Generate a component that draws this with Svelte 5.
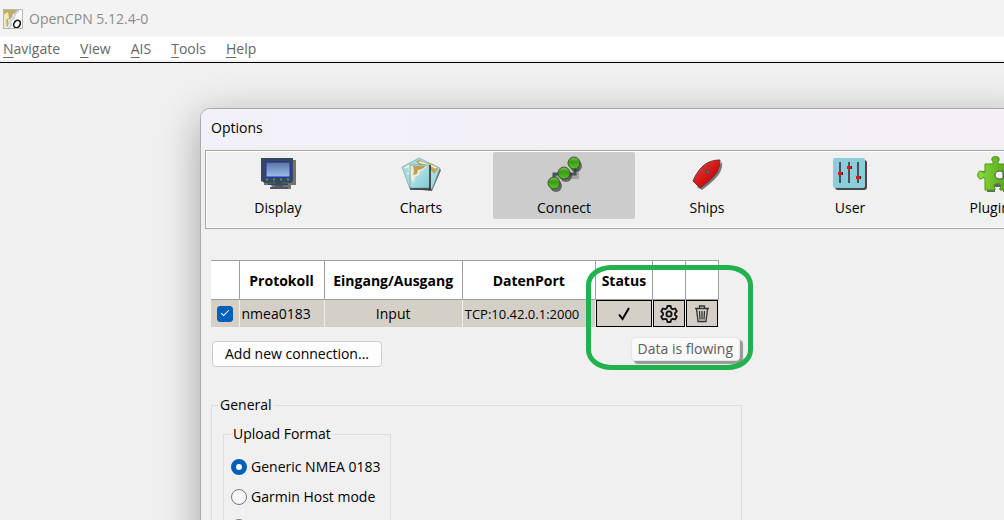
<script lang="ts">
  const menus = ["Navigate", "View", "AIS", "Tools", "Help"];
  const tabs = ["Display", "Charts", "Connect", "Ships", "User", "Plugins"];
  const formats = ["Generic NMEA 0183", "Garmin Host mode", "Furuno GP3X"];

  let activeTab = $state("Connect");
  let enabled = $state(true);
  let format = $state("Generic NMEA 0183");
</script>

<div class="app">
  <header class="titlebar">
    <svg width="20" height="20" viewBox="0 0 20 20" aria-hidden="true">
      <rect width="20" height="20" fill="#fbfbf8" />
      <path d="M0 0H16L13 4L10 5L9 9L5 11L6 15L3 20H0Z" fill="#c5ac64" />
      <path d="M0 6L5 3L6 9L3 11L4 20H0Z" fill="#f0e6bf" />
      <path d="M16 1L12 5L11 9L7 12L8 16L5 20" fill="none" stroke="#b9d7ea" stroke-width="2" />
      <ellipse cx="14" cy="15" rx="3" ry="4" transform="rotate(32 14 15)" fill="none" stroke="#111" stroke-width="1.6" />
      <path d="M0.5 20V0.5H19.5V19.5H0" fill="none" stroke="#b9b9b0" stroke-width="1" />
    </svg>
    <span>OpenCPN 5.12.4-0</span>
  </header>

  <nav class="menubar">
    {#each menus as menu}
      <button><u>{menu[0]}</u>{menu.slice(1)}</button>
    {/each}
  </nav>

  <main class="canvas">
    <section class="dialog" aria-labelledby="dialog-title">
      <h1 id="dialog-title">Options</h1>

      <div class="tabs" role="tablist">
        {#each tabs as tab}
          <button
            class="tab"
            class:active={activeTab === tab}
            role="tab"
            aria-selected={activeTab === tab}
            onclick={() => (activeTab = tab)}
          >
            <svg width="40" height="36" viewBox="0 0 40 36" aria-hidden="true">
              {#if tab === "Display"}
                <path d="M6 4H38V29H33V33H15L13 29H6Z" fill="#555" opacity="0.8" />
                <path d="M3 2H35V25L33 27H30V29H10V27H7L3 25Z" fill="#34495f" />
                <rect x="8" y="6" width="24" height="15" fill="url(#screen)" stroke="#2b22d8" stroke-width="1" />
                <path d="M8 6.5H32" stroke="#3c4b75" />
                <path d="M8 23.5h2M15 23.5h2M22 23.5h2M29 23.5h2" stroke="#27b04a" stroke-width="2" />
                <path d="M11 27H18M24 27H31" stroke="#6a625c" />
                <path d="M17 29H25V31H30V33H12V31H17Z" fill="#52585e" />
              {:else if tab === "Charts"}
                <path d="M10 33L31 35L40 14L37 11L30 30Z" fill="#444" opacity="0.85" />
                <path d="M1 11L18 2L39 12L31 33H9Z" fill="#a5dce1" stroke="#7fa1a5" stroke-width="0.7" />
                <path d="M15 5L19 4L22 6L32 8L37 13L33 18L31 15L27 14L25 9L18 9Z" fill="#bea55d" />
                <path d="M18 6L25 8L31 10L35 12M4 12L8 10L9 17L6 18" fill="none" stroke="#f3f0dc" stroke-width="1.6" />
                <rect x="9" y="9" width="20" height="23" fill="url(#chart)" stroke="#72999d" stroke-width="0.7" />
                <path d="M10 10H26L22 14L19 15L18 19L14 21L13 27L10 23Z" fill="#f0ecd9" />
                <path d="M12 10H25L21 13L17 14L16 18L12 19L13 15Z" fill="#bea055" />
                <path d="M29 9V33M9 33H30" stroke="#303537" stroke-width="1.6" />
              {:else if tab === "Connect"}
                <path d="M13 30V21H33V12" fill="none" stroke="#777" stroke-width="4" opacity="0.5" />
                <path d="M10 27V18H31V8" fill="none" stroke="#46535c" stroke-width="3" />
                {#each [[30, 7], [20, 17], [10, 27]] as [x, y]}
                  <circle cx={x + 2} cy={y + 3} r="6" fill="#333" opacity="0.65" />
                  <circle cx={x} cy={y} r="6" fill="url(#ball)" stroke="#3b5632" stroke-width="1" />
                {/each}
              {:else if tab === "Ships"}
                <path d="M35 6C36 15 31 22 15 34L10 31Z" fill="#444" opacity="0.7" />
                <path d="M33 4C26 4 20 6 15 11C11 15 8 20 6 25L13 32C20 27 27 21 30 16C32 12 33 8 33 4Z" fill="url(#hull)" stroke="#6b3334" stroke-width="1" />
                <circle cx="21" cy="16" r="2" fill="#77595a" stroke="#55484b" stroke-width="1" />
              {:else if tab === "User"}
                <rect x="5" y="4" width="32" height="30" rx="3" fill="#484848" />
                <rect x="3" y="2" width="32" height="30" rx="2" fill="#8ccddb" />
                <path d="M10 6V27M19 6V27M28 6V27" stroke="#4c5254" stroke-width="2" />
                <path d="M11 17.5h2M20 11.5h2M29 21.5h2" stroke="#302020" stroke-width="3" />
                <path d="M8 17.5h4M17 11.5h4M26 21.5h4" stroke="#e51313" stroke-width="3" />
              {:else}
                <path d="M14 10V15H8V22H14V36H22V31H30V36H40V12Z" fill="#444" opacity="0.8" />
                <path
                  d="M12 8H20C21 6 18 5 19 2C20 0 25 0 26 2C27 5 24 6 25 8H38V34H27C26 32 29 31 28 29C27 27 22 27 21 29C20 31 23 32 22 34H12V22C10 21 9 23 7 23C4 22 4 16 7 15C9 15 10 17 12 16Z"
                  fill="url(#puzzle)" stroke="#4e931c" stroke-width="1"
                />
                <path d="M30 16C27 14 22 15 22 19C22 23 27 24 30 22Z" fill="#f0f0f0" stroke="#454b40" stroke-width="1" />
              {/if}
            </svg>
            <span>{tab}</span>
          </button>
        {/each}
      </div>

      <div class="panel">
        <div class="connections">
          <table>
            <colgroup>
              <col class="c-check" /><col class="c-protocol" /><col class="c-io" />
              <col class="c-port" /><col class="c-status" /><col class="c-icon" /><col class="c-icon" />
            </colgroup>
            <thead>
              <tr>
                <th></th>
                <th>Protokoll</th>
                <th>Eingang/Ausgang</th>
                <th>DatenPort</th>
                <th>Status</th>
                <th></th>
                <th></th>
              </tr>
            </thead>
            <tbody>
              <tr>
                <td><input type="checkbox" aria-label="Enable connection" bind:checked={enabled} /></td>
                <td class="protocol">nmea0183</td>
                <td>Input</td>
                <td class="port">TCP:10.42.0.1:2000</td>
                <td>
                  <button class="cell-button" aria-label="Data is flowing">
                    <svg width="16" height="16" viewBox="0 0 16 16">
                      <path d="M3 8.5L6.5 13L13 2" fill="none" stroke="#000" stroke-width="2" />
                    </svg>
                  </button>
                </td>
                <td>
                  <button class="cell-button" aria-label="Edit connection">
                    <svg width="18" height="18" viewBox="0 0 18 18" fill="none" stroke="#111" stroke-width="1.8" stroke-linejoin="round">
                      <path d="M7.4 1H10.6L11.2 3.4L12.7 4.2L15.1 3.5L16.8 6.3L15 8.1V9.9L16.8 11.7L15.1 14.5L12.7 13.8L11.2 14.6L10.6 17H7.4L6.8 14.6L5.3 13.8L2.9 14.5L1.2 11.7L3 9.9V8.1L1.2 6.3L2.9 3.5L5.3 4.2L6.8 3.4Z" />
                      <circle cx="9" cy="9" r="2.6" />
                    </svg>
                  </button>
                </td>
                <td>
                  <button class="cell-button" aria-label="Delete connection">
                    <svg width="16" height="18" viewBox="0 0 16 18" fill="none" stroke="#333" stroke-width="1.3">
                      <path d="M1 3.5H15M5.5 3V1H10.5V3M2.5 4L4 16.5H12L13.5 4M5.5 6L6 14.5M8 6V14.5M10.5 6L10 14.5" />
                    </svg>
                  </button>
                </td>
              </tr>
            </tbody>
          </table>
          <div class="tooltip" role="tooltip">Data is flowing</div>
          <div class="highlight"></div>
        </div>

        <button class="add">Add new connection...</button>

        <fieldset class="general">
          <legend>General</legend>
          <fieldset class="upload">
            <legend>Upload Format</legend>
            {#each formats as name}
              <label>
                <input type="radio" name="format" value={name} bind:group={format} />
                {name}
              </label>
            {/each}
          </fieldset>
        </fieldset>
      </div>
    </section>
  </main>

  <svg class="defs" width="0" height="0" aria-hidden="true">
    <defs>
      <linearGradient id="screen" x2="0" y2="1">
        <stop stop-color="#5674a6" /><stop offset="1" stop-color="#9dbce8" />
      </linearGradient>
      <linearGradient id="chart" x2="1" y2="1">
        <stop stop-color="#c9eef0" /><stop offset="1" stop-color="#7cc9d1" />
      </linearGradient>
      <linearGradient id="ball" x2="0" y2="1">
        <stop stop-color="#7ac653" /><stop offset="0.4" stop-color="#3d9a18" /><stop offset="1" stop-color="#55c91f" />
      </linearGradient>
      <linearGradient id="hull" x2="1" y2="1">
        <stop offset="0.2" stop-color="#b74848" /><stop offset="0.5" stop-color="#e01414" /><stop offset="0.8" stop-color="#a80e10" />
      </linearGradient>
      <linearGradient id="puzzle" x2="1" y2="0">
        <stop stop-color="#8bdc3a" /><stop offset="1" stop-color="#4c9e18" />
      </linearGradient>
    </defs>
  </svg>
</div>

<style>
  :global(body) {
    margin: 0;
    background: #f0f0f0;
  }

  .app {
    display: flex;
    flex-direction: column;
    height: 100vh;
    overflow: hidden;
    font-family: "Segoe UI", "Open Sans", "Noto Sans", sans-serif;
    font-size: 14px;
    line-height: 20px;
    color: #000;
  }

  button {
    font: inherit;
    color: inherit;
    padding: 0;
    border: none;
    background: none;
  }

  svg {
    display: block;
    overflow: visible;
  }

  .defs {
    position: absolute;
  }

  .titlebar {
    display: flex;
    align-items: center;
    gap: 6px;
    height: 37px;
    padding: 0 3px;
    background: #f3f3f3;
    color: #8c8c8c;
  }

  .menubar {
    display: flex;
    gap: 20px;
    height: 23px;
    padding: 0 3px;
    background: #fff;
    color: #666;
    border-bottom: 2px solid #f3f3f3;
  }

  .menubar u {
    text-underline-offset: 3px;
  }

  .canvas {
    flex: 1;
    min-height: 0;
    border-top: 1px solid #000;
    padding: 45px 0 0 200px;
    overflow: hidden;
  }

  /* ---- Options dialog ---- */
  .dialog {
    min-height: 100%;
    margin-right: -40px;
    padding-bottom: 40px;
    border: 1px solid #a9a9ab;
    border-radius: 10px;
    background: #f0f0f0;
    box-shadow: 0 10px 42px rgba(0, 0, 0, 0.32);
  }

  h1 {
    margin: 0 0 4px;
    padding: 9px 10px 8px;
    border-radius: 9px 9px 0 0;
    background: linear-gradient(90deg, #f2f1f9, #f5eff6);
    font-size: 14px;
    font-weight: 400;
  }

  .tabs {
    display: flex;
    gap: 1px;
    height: 77px;
    margin-left: 4px;
    padding-left: 1px;
    border: 1px solid #a5a5ac;
    overflow: hidden;
    box-shadow: inset 0 0 0 1px #fff;
  }

  .tab {
    display: flex;
    flex: 0 0 142px;
    flex-direction: column;
    align-items: center;
    gap: 6px;
    height: 67px;
    margin-top: 1px;
    padding-top: 4px;
    box-sizing: border-box;
    border-radius: 2px;
  }

  .tab.active {
    background: #ccc;
  }

  .panel {
    padding: 31px 0 0 10px;
  }

  /* ---- Connections table ---- */
  .connections {
    position: relative;
    width: 508px;
  }

  table {
    width: 100%;
    table-layout: fixed;
    border-collapse: collapse;
  }

  .c-check { width: 28px; }
  .c-protocol { width: 85px; }
  .c-io { width: 138px; }
  .c-port { width: 133px; }
  .c-status { width: 57px; }
  .c-icon { width: 33px; }

  th {
    height: 36px;
    padding: 2px 0 0;
    background: #fff;
    border: 1px solid #a0a0a0;
    font-weight: 700;
    white-space: nowrap;
  }

  th:first-child {
    border-left: none;
  }

  td {
    height: 27px;
    padding: 0;
    background: #d4d0c8;
    border-right: 1px solid #eee;
    text-align: center;
    white-space: nowrap;
  }

  .protocol {
    padding-left: 2px;
    text-align: left;
  }

  .port {
    padding-left: 2px;
    font-size: 13px;
    text-align: left;
  }

  input[type="checkbox"] {
    appearance: none;
    display: block;
    position: relative;
    width: 16px;
    height: 16px;
    margin: 0 auto;
    border: 1px solid #777;
    border-radius: 3px;
    background: #fff;
  }

  input[type="checkbox"]:checked {
    background: #005fb8;
    border-color: #005fb8;
  }

  input[type="checkbox"]:checked::after {
    content: "";
    position: absolute;
    left: 3px;
    top: 3px;
    width: 7px;
    height: 3px;
    border: solid #fff;
    border-width: 0 0 1px 1px;
    transform: rotate(-45deg);
  }

  .cell-button {
    display: flex;
    align-items: center;
    justify-content: center;
    width: 100%;
    height: 27px;
    border: 1px solid #000;
  }

  .tooltip {
    position: absolute;
    right: -21px;
    top: 77px;
    padding: 1px 6px;
    border: 1px solid #e5e5e5;
    border-radius: 4px;
    background: #f9f9f9;
    box-shadow: 3px 3px 1px #999;
    color: #5c5c5c;
    white-space: nowrap;
  }

  .highlight {
    position: absolute;
    right: -34px;
    top: 5px;
    width: 157px;
    height: 95px;
    border: 5px solid #22b14c;
    border-radius: 25px / 20px;
    pointer-events: none;
  }

  .add {
    display: block;
    margin: 14px 0 0 1px;
    padding: 2px 12px;
    border: 1px solid #ccc;
    border-radius: 4px;
    background: #fdfdfd;
  }

  /* ---- General settings ---- */
  fieldset {
    margin: 0;
    border: 1px solid #dcdcdc;
  }

  legend {
    padding: 0 2px;
  }

  .general {
    width: 531px;
    box-sizing: border-box;
    margin-top: 28px;
    padding: 9px 11px;
  }

  .general > legend {
    margin-left: -5px;
  }

  .upload {
    width: 168px;
    box-sizing: border-box;
    padding: 8px 7px;
  }

  .upload label {
    display: flex;
    align-items: center;
    gap: 4px;
    height: 30px;
    white-space: nowrap;
  }

  input[type="radio"] {
    appearance: none;
    flex: none;
    width: 16px;
    height: 16px;
    margin: 0;
    border: 1px solid #777;
    border-radius: 50%;
    background: #f6f6f6;
  }

  input[type="radio"]:checked {
    border: 5px solid #005fb8;
    background: #fff;
  }
</style>
